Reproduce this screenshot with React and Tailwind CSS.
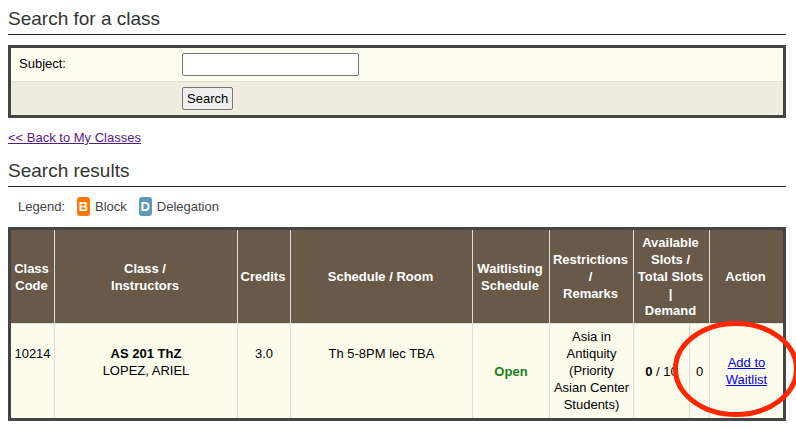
import React from 'react';

const classes = [
  {
    code: '10214',
    name: 'AS 201 ThZ',
    instructor: 'LOPEZ, ARIEL',
    credits: '3.0',
    schedule: 'Th 5-8PM lec TBA',
    waitlisting: 'Open',
    remarks: 'Asia in Antiquity (Priority Asian Center Students)',
    available: 0,
    total: 10,
    demand: 0,
  },
];

function SectionTitle({ children }) {
  return (
    <h2 className="border-b border-[#222] pb-1 text-[19px] leading-[22px] text-[#333]">{children}</h2>
  );
}

function LegendItem({ letter, label, color }) {
  return (
    <li className="flex items-center gap-[5px]">
      <span className={`w-[13px] rounded-[3px] text-center text-[13px] leading-[19px] font-bold text-white ${color}`}>
        {letter}
      </span>
      {label}
    </li>
  );
}

function SearchForm() {
  return (
    <form
      className="mt-2.5 border-3 border-[#444] bg-[#fdfdf0] text-black"
      onSubmit={(e) => e.preventDefault()}
    >
      <div className="flex items-start border-b border-[#e3dfd0] px-2 py-[5px]">
        <label htmlFor="subject" className="w-[163px] pt-0.5 leading-[17px]">
          Subject:
        </label>
        <input
          id="subject"
          type="text"
          className="h-[23px] w-[177px] rounded-xs border border-[#767676] bg-white px-1"
        />
      </div>
      <div className="bg-[#efece0] py-[5px] pr-2 pl-[171px]">
        <button
          type="submit"
          className="block h-[23px] rounded-xs border border-[#767676] bg-[#efefef] px-1 leading-[17px]"
        >
          Search
        </button>
      </div>
    </form>
  );
}

function Th({ children, ...props }) {
  return (
    <th className="border-r border-b border-[#ddd] py-1 pr-1 pl-0.5 align-middle font-bold last:border-r-0" {...props}>
      {children}
    </th>
  );
}

function ResultsTable() {
  return (
    <div className="relative mt-[11px] border-3 border-[#444]">
      <table className="w-full table-fixed border-separate border-spacing-0 text-center leading-[17px] text-black">
        <colgroup>
          <col className="w-[44px]" />
          <col className="w-[183px]" />
          <col className="w-[53px]" />
          <col />
          <col className="w-[77px]" />
          <col className="w-[84px]" />
          <col className="w-[56px]" />
          <col className="w-[20px]" />
          <col className="w-[73px]" />
        </colgroup>
        <thead className="bg-[#695948] text-white">
          <tr>
            <Th>Class Code</Th>
            <Th>
              Class /<br />
              Instructors
            </Th>
            <Th>Credits</Th>
            <Th>Schedule / Room</Th>
            <Th>Waitlisting Schedule</Th>
            <Th>
              Restrictions
              <br />/<br />
              Remarks
            </Th>
            <Th colSpan={2}>
              Available
              <br />
              Slots /<br />
              Total Slots
              <br />|<br />
              Demand
            </Th>
            <Th>Action</Th>
          </tr>
        </thead>
        <tbody className="bg-[#fcfced]">
          {classes.map((c) => (
            <tr key={c.code} className="[&>td]:border-r [&>td]:border-[#ddd] [&>td:last-child]:border-r-0">
              <td className="pt-[21px] align-top">{c.code}</td>
              <td className="pt-[21px] align-top">
                <b>{c.name}</b>
                <br />
                {c.instructor}
              </td>
              <td className="pt-[21px] align-top">{c.credits}</td>
              <td className="pt-[21px] align-top">{c.schedule}</td>
              <td className="align-middle font-bold text-[#1a7f1a]">{c.waitlisting}</td>
              <td className="px-0.5 pt-1 pb-[5px] align-middle">{c.remarks}</td>
              <td className="align-middle">
                <b>{c.available}</b> / {c.total}
              </td>
              <td className="align-middle">{c.demand}</td>
              <td className="px-3 align-middle">
                <a href="#waitlist" className="text-[#0000ee] underline">
                  Add to Waitlist
                </a>
              </td>
            </tr>
          ))}
        </tbody>
      </table>
      {/* Highlight around the waitlist action */}
      <svg
        className="pointer-events-none absolute -right-4 bottom-px h-[96px] w-[126px]"
        viewBox="0 0 126 96"
        fill="none"
        aria-hidden="true"
      >
        <ellipse cx="63" cy="48" rx="60.5" ry="45.5" stroke="#ff2600" strokeWidth="5" />
      </svg>
    </div>
  );
}

export default function App() {
  return (
    <main className="overflow-x-hidden bg-white pt-2 pr-2.5 pb-2 pl-2 font-['Liberation_Sans',Arial,sans-serif] text-[13px] leading-[17px] text-[#444]">
      <SectionTitle>Search for a class</SectionTitle>
      <SearchForm />
      <p className="mt-[11px] mb-3.5">
        <a href="#classes" className="text-[#551a8b] underline">
          &lt;&lt; Back to My Classes
        </a>
      </p>
      <SectionTitle>Search results</SectionTitle>
      <ul className="mt-2.5 flex items-center gap-3 pl-2.5">
        <li>Legend:</li>
        <LegendItem letter="B" label="Block" color="bg-[#ff7700]" />
        <LegendItem letter="D" label="Delegation" color="bg-[#5f9ab5]" />
      </ul>
      <ResultsTable />
    </main>
  );
}
